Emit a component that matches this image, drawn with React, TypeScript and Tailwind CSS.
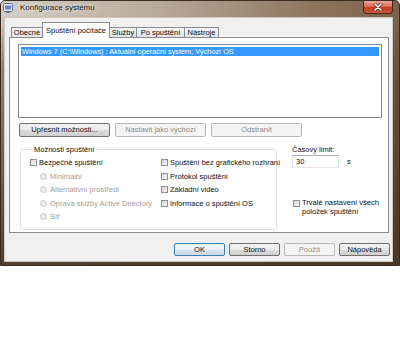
const font = "font-['Liberation_Sans',Arial,sans-serif]";

function CheckBox() {
  return (
    <span className="box-border inline-block h-[7px] w-[7px] shrink-0 border border-[#8e8f8f] bg-[linear-gradient(135deg,#d4d4d4,#f9f9f9)]" />
  );
}

function Radio() {
  return <span className="box-border inline-block h-[7px] w-[7px] shrink-0 rounded-full border border-[#c9c9c9] bg-[#ececec]" />;
}

function Btn({ label, disabled, primary, w }: { label: string; disabled?: boolean; primary?: boolean; w: string }) {
  const look = disabled
    ? "border-[#b5b9bc] bg-[#f4f4f4] text-[#8d8d8d]"
    : primary
      ? "border-[#3c7fb1] bg-[linear-gradient(to_bottom,#f4f8fb_0%,#e8eff5_50%,#d9e4ee_51%,#cfdbe6_100%)] text-[#111]"
      : "border-[#707070] bg-[linear-gradient(to_bottom,#f2f2f2_0%,#ebebeb_50%,#dddddd_51%,#cfcfcf_100%)] text-[#111]";
  return (
    <div className={`box-border flex items-center justify-center whitespace-nowrap rounded-[2px] border text-[7.5px] leading-none ${look} ${w}`}>
      {label}
    </div>
  );
}

function Tab({ label, active, w }: { label: string; active?: boolean; w: string }) {
  return active ? (
    <div className={`relative z-10 -mb-px -ml-px box-border flex h-[16px] items-start justify-center whitespace-nowrap border border-b-0 border-[#898c95] bg-white pt-[3px] text-[7.5px] leading-[9px] text-[#111] ${w}`}>
      {label}
    </div>
  ) : (
    <div className={`-ml-px box-border flex h-[10px] items-center justify-center whitespace-nowrap border border-b-0 border-[#898c95] bg-[linear-gradient(to_bottom,#f5f5f5,#e3e3e3)] text-[7.5px] leading-none text-[#111] first:ml-0 ${w}`}>
      {label}
    </div>
  );
}

function CheckRow({ label }: { label: string }) {
  return (
    <div className="flex h-[13.5px] items-center gap-[2px] whitespace-nowrap text-[7.5px] leading-none text-[#111]">
      <CheckBox />
      <span>{label}</span>
    </div>
  );
}

function RadioRow({ label }: { label: string }) {
  return (
    <div className="flex h-[13.5px] items-center gap-[3px] whitespace-nowrap pl-[10px] text-[7.5px] leading-none text-[#9e9e9e]">
      <Radio />
      <span>{label}</span>
    </div>
  );
}

export default function App() {
  return (
    <div className={`h-[342px] w-[400px] overflow-hidden bg-white ${font}`}>
      <div className="flex h-[266px] w-[400px] flex-col rounded-t-[5px] border border-[#3a2c20] bg-[linear-gradient(to_bottom,rgba(0,0,0,0)_5%,rgba(92,68,46,0.55)_25%,rgba(70,50,33,0.92)_100%),linear-gradient(to_right,#d6cfc8,#b8a998_40%,#8d7560_78%,#7a624d)]">
        {/* title bar */}
        <div className="flex h-[16px] shrink-0 items-start">
          <svg className="ml-[2px] mt-[2px]" width="10" height="10" viewBox="0 0 10 10">
            <rect x="0.5" y="0.5" width="9" height="8" rx="1" fill="#e9eef5" stroke="#5a6a86" />
            <rect x="2" y="2.5" width="6" height="4" fill="#6c7fd0" />
            <rect x="3" y="9" width="4" height="1" fill="#5a6a86" />
          </svg>
          <span className="ml-[7px] mt-[2px] text-[8px] leading-[10px] text-[#1e1e1e] [text-shadow:0_0_4px_rgba(255,255,255,0.9)]">
            Konfigurace systému
          </span>
          <div className="ml-auto mr-[6px] box-border flex h-[13px] w-[30px] items-center justify-center rounded-b-[4px] border border-t-0 border-[#4f2117] bg-[linear-gradient(to_bottom,#e8a796_0%,#d9705a_45%,#c2391f_55%,#cf5b3f_100%)]">
            <svg width="10" height="8" viewBox="0 0 10 8">
              <path d="M2 1 L8 7 M8 1 L2 7" stroke="#5a2418" strokeWidth="3" strokeLinecap="round" />
              <path d="M2 1 L8 7 M8 1 L2 7" stroke="#ffffff" strokeWidth="1.6" strokeLinecap="round" />
            </svg>
          </div>
        </div>

        {/* client area */}
        <div className="mb-[3px] ml-[3px] mr-[6px] flex flex-1 flex-col border border-[#cfc7bd] bg-[#f0f0f0]">
          {/* tabs */}
          <div className="ml-[6px] flex h-[19px] items-end">
            <Tab label="Obecné" w="w-[32px]" />
            <Tab label="Spuštění počítače" active w="w-[68px]" />
            <Tab label="Služby" w="w-[28px]" />
            <Tab label="Po spuštění" w="w-[49px]" />
            <Tab label="Nástroje" w="w-[35px]" />
          </div>

          {/* tab panel */}
          <div className="ml-[4px] box-border flex h-[196px] w-[380px] flex-col border border-[#898c95] bg-white pl-[8px] pt-[6px]">
            <div className="box-border h-[74px] w-[364px] border border-[#828790] bg-white p-[2px]">
              <div className="flex h-[9px] items-center whitespace-nowrap bg-[#3399ff] pl-[1px] text-[7.3px] leading-none text-white">
                {"Windows 7 (C:\\Windows) : Aktuální operační systém; Výchozí OS"}
              </div>
            </div>

            <div className="ml-[1px] mt-[5px] flex h-[14px] gap-[5px]">
              <Btn label="Upřesnit možnosti..." w="w-[91px]" />
              <Btn label="Nastavit jako výchozí" disabled w="w-[91px]" />
              <Btn label="Odstranit" disabled w="w-[91px]" />
            </div>

            <div className="mt-[8px] flex items-start">
              <fieldset className="ml-[2px] box-border w-[257px] min-w-0 shrink-0 rounded-[3px] border border-[#d5dfe5] pb-[5px] pl-[9px]">
                <legend className="ml-[2px] px-[2px] text-[7.5px] leading-[9px] text-[#111]">Možnosti spuštění</legend>
                <div className="flex pt-[2px]">
                  <div className="w-[131px] shrink-0">
                    <CheckRow label="Bezpečné spuštění" />
                    <RadioRow label="Minimální" />
                    <RadioRow label="Alternativní prostředí" />
                    <RadioRow label="Oprava služby Active Directory" />
                    <RadioRow label="Síť" />
                  </div>
                  <div className="min-w-0">
                    <CheckRow label="Spuštění bez grafického rozhraní" />
                    <CheckRow label="Protokol spuštění" />
                    <CheckRow label="Základní video" />
                    <CheckRow label="Informace o spuštění OS" />
                  </div>
                </div>
              </fieldset>

              <div className="ml-[15px] flex flex-col text-[7.5px] text-[#111]">
                <span className="leading-[9px]">Časový limit:</span>
                <div className="mt-[1px] flex items-center">
                  <div className="box-border flex h-[13px] w-[47px] items-center border border-[#abadb3] border-b-[#e3e9ef] border-l-[#e2e3ea] border-r-[#dbdfe6] bg-white pl-[3px] leading-none">
                    30
                  </div>
                  <span className="ml-[8px] leading-none">s</span>
                </div>
                <div className="ml-[1px] mt-[30px] flex items-start gap-[2px]">
                  <span className="mt-[1px]">
                    <CheckBox />
                  </span>
                  <span className="whitespace-nowrap leading-[9px]">
                    Trvalé nastavení všech
                    <br />
                    položek spuštění
                  </span>
                </div>
              </div>
            </div>
          </div>

          {/* dialog buttons */}
          <div className="mr-[2px] mt-[10px] flex h-[13px] justify-end gap-[4px]">
            <Btn label="OK" primary w="w-[51px]" />
            <Btn label="Storno" w="w-[51px]" />
            <Btn label="Použít" disabled w="w-[51px]" />
            <Btn label="Nápověda" w="w-[51px]" />
          </div>
        </div>
      </div>
    </div>
  );
}
